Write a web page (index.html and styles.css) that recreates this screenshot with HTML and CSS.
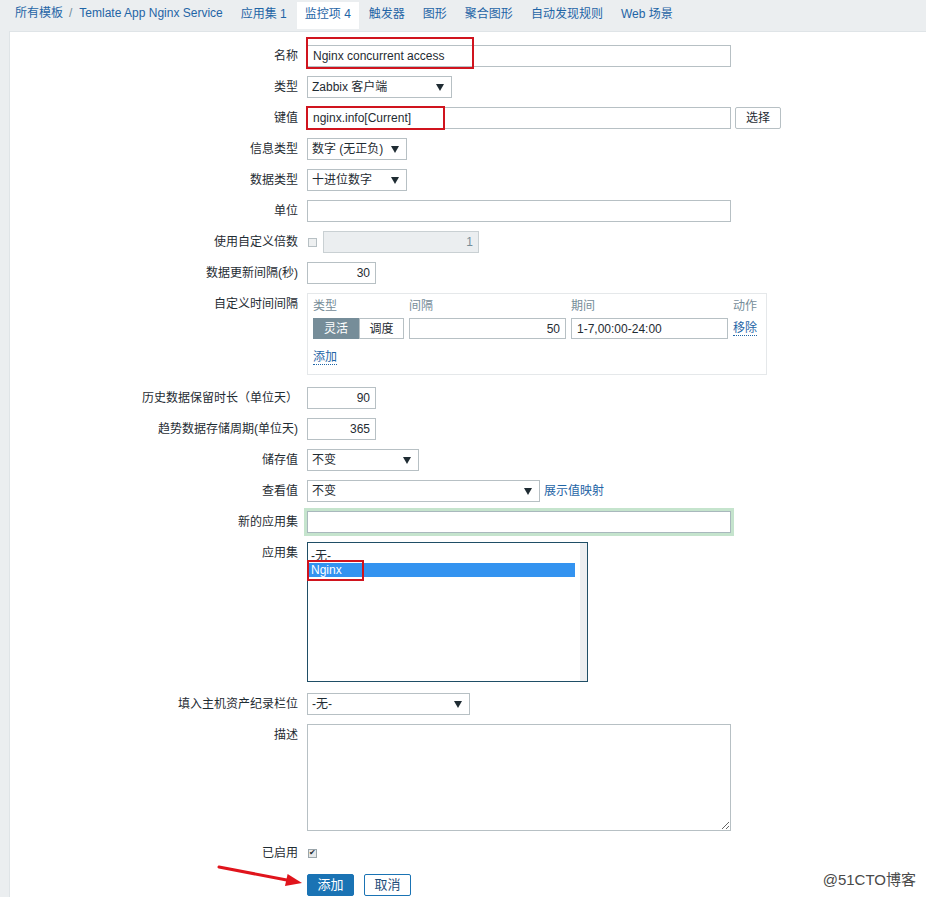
FILE: index.html
```html
<!DOCTYPE html>
<html lang="zh-CN">
<head>
<meta charset="utf-8">
<title>监控项</title>
<link rel="stylesheet" href="styles.css">
</head>
<body>
<div class="nav">
  <div class="crumbs">
    <a class="link">所有模板</a><span class="sep">/</span><a class="link">Temlate App Nginx Service</a>
  </div>
  <ul class="tabs">
    <li><a class="link">应用集</a> 1</li>
    <li class="active"><a class="link">监控项</a> 4</li>
    <li><a class="link">触发器</a></li>
    <li><a class="link">图形</a></li>
    <li><a class="link">聚合图形</a></li>
    <li><a class="link">自动发现规则</a></li>
    <li><a class="link">Web 场景</a></li>
  </ul>
</div>

<div class="panel">
  <div class="form">
    <div class="row">
      <div class="label">名称</div>
      <div class="field mark-wrap">
        <input class="input w-xl" value="Nginx concurrent access">
        <span class="mark mark-name"></span>
      </div>
    </div>
    <div class="row">
      <div class="label">类型</div>
      <div class="field"><div class="select w-type">Zabbix 客户端<span class="arrow"></span></div></div>
    </div>
    <div class="row">
      <div class="label">键值</div>
      <div class="field mark-wrap">
        <input class="input w-xl" value="nginx.info[Current]">
        <button class="btn-plain">选择</button>
        <span class="mark mark-key"></span>
      </div>
    </div>
    <div class="row">
      <div class="label">信息类型</div>
      <div class="field"><div class="select w-s">数字 (无正负)<span class="arrow"></span></div></div>
    </div>
    <div class="row">
      <div class="label">数据类型</div>
      <div class="field"><div class="select w-s">十进位数字<span class="arrow"></span></div></div>
    </div>
    <div class="row">
      <div class="label">单位</div>
      <div class="field"><input class="input w-xl" value=""></div>
    </div>
    <div class="row">
      <div class="label">使用自定义倍数</div>
      <div class="field">
        <span class="check disabled"></span>
        <input class="input w-mult num" value="1" disabled>
      </div>
    </div>
    <div class="row">
      <div class="label">数据更新间隔(秒)</div>
      <div class="field"><input class="input w-num num" value="30"></div>
    </div>
    <div class="row row-interval">
      <div class="label">自定义时间间隔</div>
      <div class="field">
        <div class="interval">
          <div class="iv-grid">
            <div class="iv-head">类型</div>
            <div class="iv-head">间隔</div>
            <div class="iv-head">期间</div>
            <div class="iv-head iv-right">动作</div>
            <div class="seg"><span class="seg-on">灵活</span><span class="seg-off">调度</span></div>
            <input class="input iv-input num" value="50">
            <input class="input iv-input" value="1-7,00:00-24:00">
            <a class="link dotted iv-act">移除</a>
          </div>
          <a class="link dotted iv-add">添加</a>
        </div>
      </div>
    </div>
    <div class="row">
      <div class="label">历史数据保留时长（单位天）</div>
      <div class="field"><input class="input w-num num" value="90"></div>
    </div>
    <div class="row">
      <div class="label">趋势数据存储周期(单位天)</div>
      <div class="field"><input class="input w-num num" value="365"></div>
    </div>
    <div class="row">
      <div class="label">储存值</div>
      <div class="field"><div class="select w-store">不变<span class="arrow"></span></div></div>
    </div>
    <div class="row">
      <div class="label">查看值</div>
      <div class="field">
        <div class="select w-view">不变<span class="arrow"></span></div>
        <a class="link map-link">展示值映射</a>
      </div>
    </div>
    <div class="row">
      <div class="label">新的应用集</div>
      <div class="field"><input class="input w-xl focus-green" value=""></div>
    </div>
    <div class="row row-list">
      <div class="label">应用集</div>
      <div class="field mark-wrap">
        <div class="listbox">
          <div class="options">
            <div class="opt">-无-</div>
            <div class="opt opt-sel">Nginx</div>
          </div>
          <div class="scroll"></div>
        </div>
        <span class="mark mark-app"></span>
      </div>
    </div>
    <div class="row">
      <div class="label">填入主机资产纪录栏位</div>
      <div class="field"><div class="select w-inv">-无-<span class="arrow"></span></div></div>
    </div>
    <div class="row row-desc">
      <div class="label">描述</div>
      <div class="field"><textarea class="textarea"></textarea></div>
    </div>
    <div class="row row-enabled">
      <div class="label">已启用</div>
      <div class="field"><span class="check checked">&#10004;</span></div>
    </div>
    <div class="row">
      <div class="label"></div>
      <div class="field buttons">
        <button class="btn-main">添加</button>
        <button class="btn-alt">取消</button>
      </div>
    </div>
  </div>
</div>

<svg class="red-arrow" width="95" height="35" viewBox="0 0 95 35">
  <line x1="5" y1="9" x2="74" y2="22.3" stroke="#e0141c" stroke-width="3" stroke-linecap="round"/>
  <polygon points="88,25 71,28 73.6,16" fill="#e0141c"/>
</svg>

<div class="watermark">@51CTO博客</div>
</body>
</html>
```

FILE: styles.css
```css
* { box-sizing: border-box; }

body {
  margin: 0;
  height: 897px;
  overflow: hidden;
  position: relative;
  background: #ebeef0;
  font-family: "Liberation Sans", "Noto Sans CJK SC", sans-serif;
  font-size: 12px;
  line-height: 14px;
  color: #1f2c33;
}

.link { color: #1f65a6; text-decoration: none; }
.dotted { border-bottom: 1px dotted #1f65a6; }

/* top navigation */
.nav {
  height: 31px;
  display: flex;
  align-items: flex-start;
  padding-left: 7px;
}
.crumbs {
  display: flex;
  padding: 0 10px 0 8px;
  line-height: 27px;
}
.sep { margin: 0 7px 0 6px; color: #768d99; }
.tabs {
  list-style: none;
  margin: 0;
  padding: 0;
  display: flex;
  gap: 2px;
}
.tabs li {
  padding: 0 8px;
  line-height: 25px;
  margin-top: 2px;
  height: 27px;
  color: #1f65a6;
}
.tabs li.active { background: #fff; }

/* panel */
.panel {
  margin-left: 9px;
  background: #fff;
  border: 1px solid #dfe4e7;
  border-right: none;
  height: 870px;
  padding-top: 13px;
}
.form { display: flex; flex-direction: column; }
.row {
  display: flex;
  align-items: flex-start;
  gap: 9px;
  margin-bottom: 9px;
}
.label {
  width: 288px;
  flex: none;
  text-align: right;
  line-height: 22px;
  white-space: nowrap;
}
.field {
  display: flex;
  align-items: center;
  min-height: 22px;
}
.row-interval { margin-bottom: 12px; }
.row-list { margin-bottom: 11px; }
.row-desc { margin-bottom: 11px; }
.row-enabled { margin-bottom: 10px; }

/* inputs */
.input {
  height: 22px;
  border: 1px solid #b7c0c4;
  background: #fff;
  font: inherit;
  color: #1f2c33;
  padding: 0 5px;
  margin: 0;
  outline: none;
}
.input.num { text-align: right; }
.input:disabled { background: #ebeef0; color: #768d99; border-color: #c9d0d3; }
.w-xl { width: 424px; }
.w-num { width: 69px; }
.w-mult { width: 156px; }
.focus-green { box-shadow: 0 0 0 3px #c5e4cd; border-color: #a9b8bd; }

.select {
  position: relative;
  height: 22px;
  border: 1px solid #b7c0c4;
  background: #fff;
  line-height: 20px;
  padding: 0 0 0 4px;
  white-space: nowrap;
}
.arrow {
  position: absolute;
  right: 7px;
  top: 7px;
  width: 0;
  height: 0;
  border-left: 4px solid transparent;
  border-right: 4px solid transparent;
  border-top: 7px solid #1f2c33;
}
.w-type { width: 145px; }
.w-s { width: 100px; }
.w-store { width: 112px; }
.w-view { width: 233px; }
.w-inv { width: 163px; }
.map-link { margin-left: 4px; }

.btn-plain {
  margin-left: 4px;
  height: 22px;
  width: 46px;
  border: 1px solid #b7c0c4;
  border-radius: 2px;
  background: #fff;
  font: inherit;
  color: #1f2c33;
  padding: 0;
}

.check {
  width: 9px;
  height: 9px;
  border: 1px solid #b7c0c4;
  background: #eef0f1;
  margin: 0 6px 0 1px;
  display: inline-flex;
  align-items: center;
  justify-content: center;
  font-size: 8px;
  line-height: 8px;
  color: #1f2c33;
}
.check.checked { background: #e6e8e9; border-color: #9aa5aa; }

/* custom intervals */
.interval {
  width: 460px;
  border: 1px solid #e5e8ea;
  padding: 5px 9px 9px 5px;
}
.iv-grid {
  display: grid;
  grid-template-columns: 91px 157px 157px 1fr;
  column-gap: 5px;
  row-gap: 5px;
  align-items: center;
}
.iv-head { color: #768d99; line-height: 14px; }
.iv-right { text-align: right; }
.seg { display: flex; height: 21px; }
.seg span {
  width: 46px;
  display: flex;
  align-items: center;
  justify-content: center;
  font-size: 12px;
}
.seg-on { background: #768d99; color: #fff; }
.seg-off { background: #fff; border: 1px solid #b7c0c4; width: 45px !important; }
.iv-input { height: 21px; width: 157px; }
.iv-act { justify-self: end; line-height: 14px; }
.iv-add { display: inline-block; margin-top: 11px; line-height: 14px; }

/* application list */
.listbox {
  width: 281px;
  height: 140px;
  border: 1px solid #1f4e66;
  display: flex;
  background: #fff;
}
.options { flex: 1; padding: 6px 5px 0 0; }
.opt { line-height: 14px; padding-left: 3px; color: #1f2c33; }
.opt-sel { background: #3393f0; color: #fff; }
.scroll { width: 7px; background: #eceef0; }

.textarea {
  width: 424px;
  height: 107px;
  border: 1px solid #b7c0c4;
  font: inherit;
  margin: 0;
  padding: 4px;
  resize: both;
  outline: none;
}

.buttons { gap: 10px; }
.btn-main, .btn-alt {
  height: 22px;
  width: 47px;
  font: inherit;
  font-size: 13px;
  border-radius: 2px;
  padding: 0;
}
.btn-main { background: #1a73b4; border: 1px solid #1a73b4; color: #fff; }
.btn-alt { background: #fff; border: 1px solid #1a73b4; color: #1f4e7a; }

/* annotations */
.mark-wrap { position: relative; }
.mark {
  position: absolute;
  border: 2px solid #d0141e;
  pointer-events: none;
}
.mark-name { left: -1px; top: -8px; width: 168px; height: 32px; }
.mark-key { left: -1px; top: -1px; width: 139px; height: 24px; }
.mark-app { left: 0; top: 18px; width: 57px; height: 21px; }

.red-arrow { position: absolute; left: 214px; top: 858px; }

.watermark {
  position: absolute;
  right: 10px;
  bottom: 8px;
  font-family: "Liberation Sans", "Noto Sans CJK SC", sans-serif;
  font-size: 15px;
  line-height: 18px;
  color: #4a4a4a;
  text-shadow: 0 0 2px #fff;
}
```
